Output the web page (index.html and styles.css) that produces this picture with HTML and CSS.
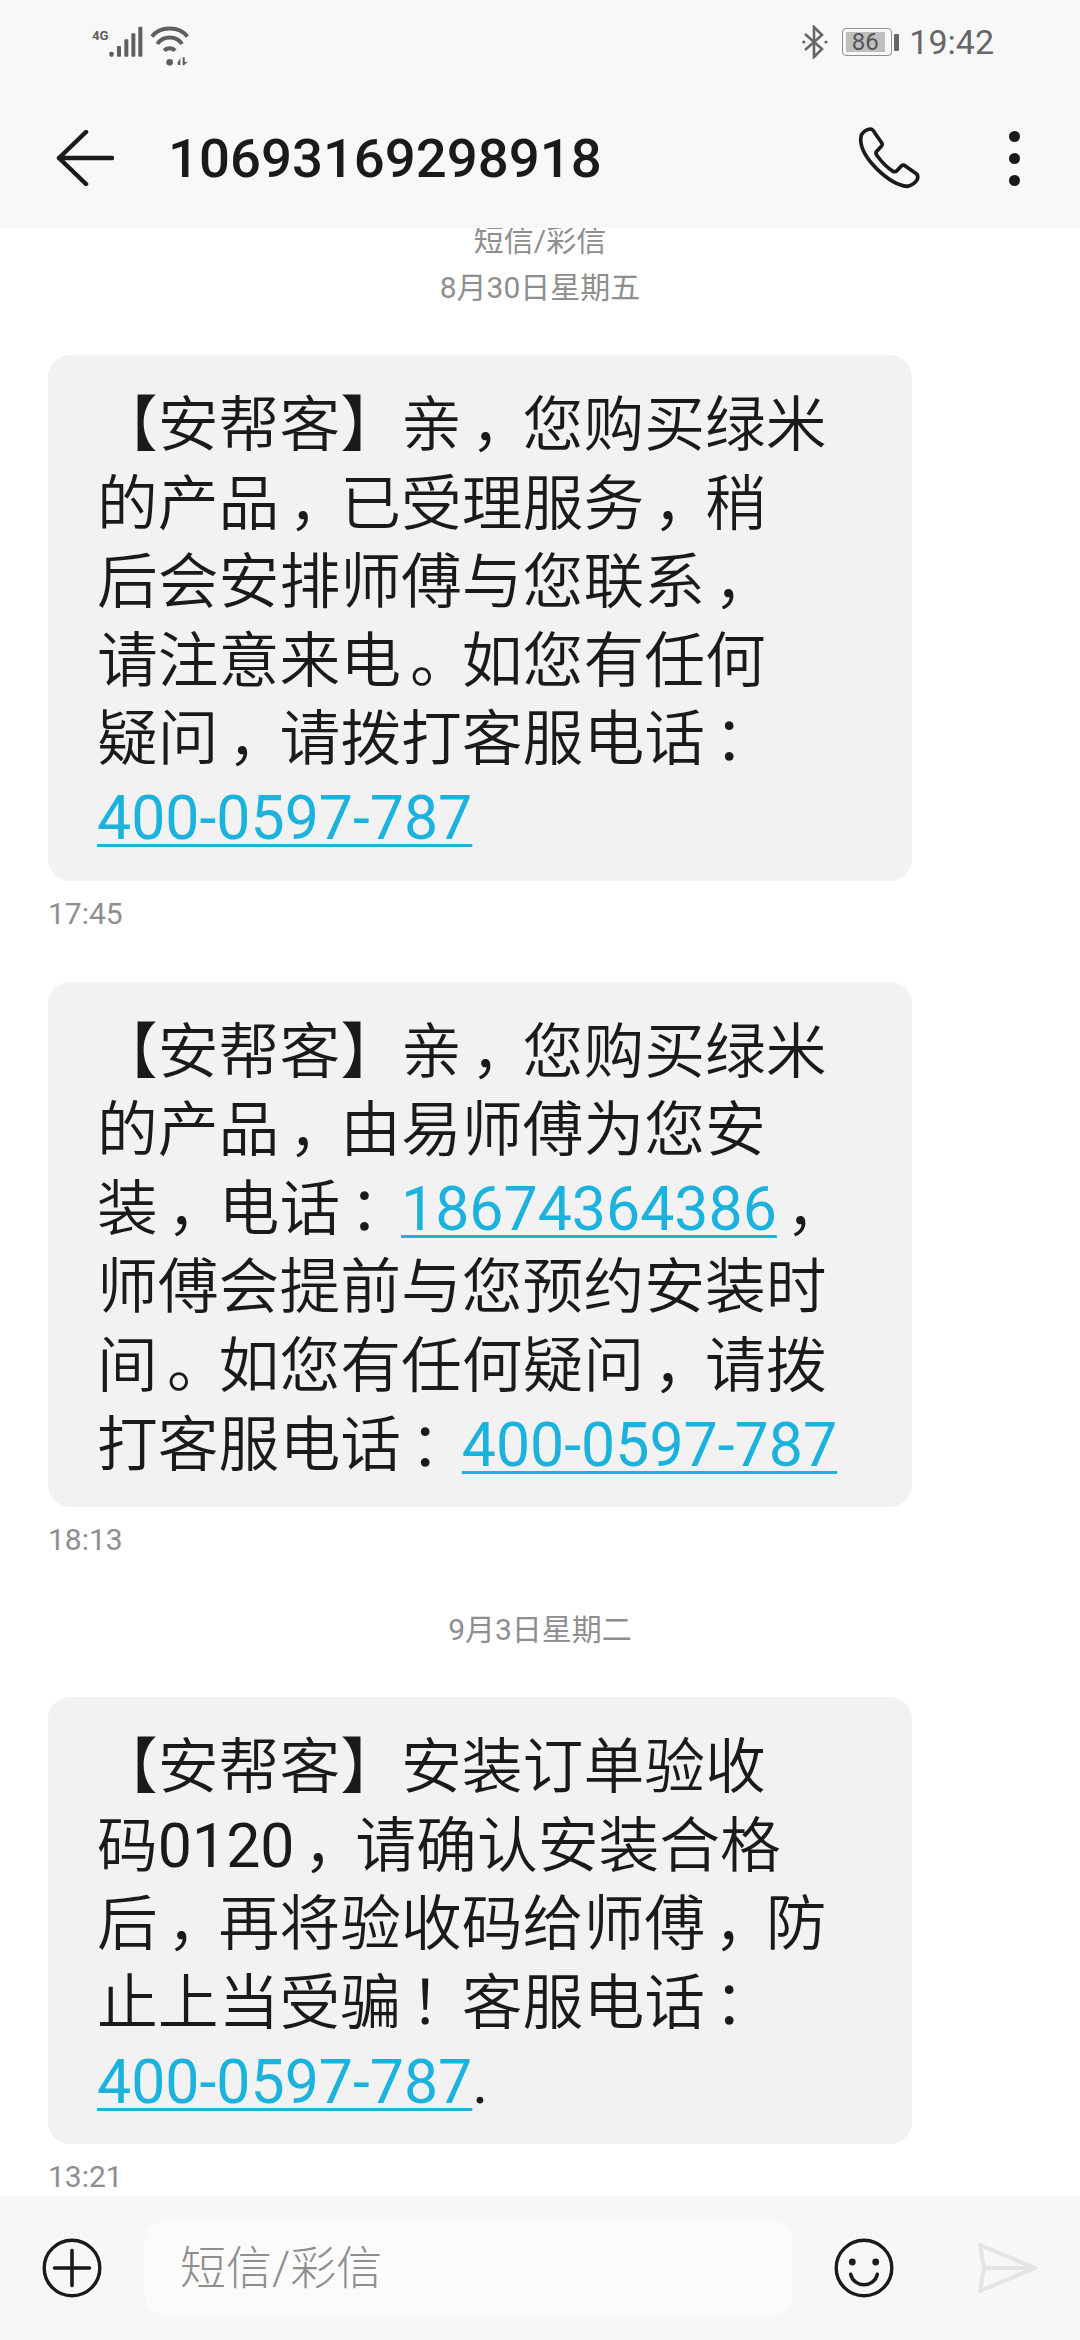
FILE: index.html
```html
<!DOCTYPE html>
<html lang="zh-CN">
<head>
<meta charset="utf-8">
<title>10693169298918</title>
<link rel="stylesheet" href="styles.css">
</head>
<body>
<div class="app">
  <div class="top">
    <div class="status">
      <svg class="radios" width="97" height="40" viewBox="12 18 291 120"><text x="12" y="60" class="sig-4g" textLength="50" lengthAdjust="spacingAndGlyphs">4G</text><g fill="#5f5f5f"><rect x="64" y="95" width="13" height="15" rx="5"/><rect x="87" y="78" width="12" height="32" rx="3"/><rect x="109" y="58" width="12" height="52" rx="3"/><rect x="130" y="40" width="12" height="70" rx="3"/><rect x="151" y="20" width="12" height="90" rx="3"/></g><g fill="none" stroke="#5f5f5f" stroke-width="12"><path d="M192 50C215 17 275 17 298 50"/><path d="M208 72C225 46 265 46 282 72"/><path d="M229 92C237 82 253 82 261 92"/></g><circle cx="245" cy="127" r="10" fill="#5f5f5f"/><path d="M268 128l9-14v21h-6zM284 112h6v14l9-1-11 11h-4z" fill="#5f5f5f"/></svg>
      <div class="status-right">
        <svg class="bt" width="26" height="34" viewBox="0 0 26 34"><path d="M3 9L20 24L12 32V2L20 10L3 25" fill="none" stroke="#666" stroke-width="2.6"/><circle cx="1.8" cy="17" r="1.6" fill="#666"/><circle cx="24" cy="17" r="1.6" fill="#666"/></svg>
        <div class="batt"><div class="batt-body"><span class="batt-fill">86</span></div><div class="batt-cap"></div></div>
        <span class="clock">19:42</span>
      </div>
    </div>
    <div class="bar">
      <svg class="back" width="58" height="56" viewBox="0 0 58 56"><path d="M30 2L3 28L30 54M3 28H56" fill="none" stroke="#1a1a1a" stroke-width="4.5" stroke-linecap="round" stroke-linejoin="round"/></svg>
      <h1 class="title">10693169298918</h1>
      <svg class="phone" width="64" height="64" viewBox="110 45 192 192"><path d="M120 72Q130 55 148 54Q155 55 160 65L182 97Q184 102 178 108L165 122Q162 128 168 135Q190 165 215 181Q222 184 228 178L240 165Q246 160 252 165L285 188Q292 195 288 205Q278 222 258 226Q215 222 165 172Q118 125 118 85Z" fill="none" stroke="#1a1a1a" stroke-width="11" stroke-linejoin="round"/></svg>
      <div class="dots"><i></i><i></i><i></i></div>
    </div>
  </div>

  <main class="thread">
    <p class="note clipped">短信/彩信</p>
    <p class="note">8月30日星期五</p>
    <div class="bubble">【安帮客】亲<span class="pc">，</span>您购买绿米<br>的产品<span class="pc">，</span>已受理服务<span class="pc">，</span>稍<br>后会安排师傅与您联系<span class="pc">，</span><br>请注意来电<span class="pc">。</span>如您有任何<br>疑问<span class="pc">，</span>请拨打客服电话<span class="pc">：</span><br><a class="link">400-0597-787</a></div>
    <p class="stamp">17:45</p>
    <div class="bubble">【安帮客】亲<span class="pc">，</span>您购买绿米<br>的产品<span class="pc">，</span>由易师傅为您安<br>装<span class="pc">，</span>电话<span class="pc">：</span><a class="link">18674364386</a><span class="pc">，</span><br>师傅会提前与您预约安装时<br>间<span class="pc">。</span>如您有任何疑问<span class="pc">，</span>请拨<br>打客服电话<span class="pc">：</span><a class="link">400-0597-787</a></div>
    <p class="stamp">18:13</p>
    <p class="note second">9月3日星期二</p>
    <div class="bubble">【安帮客】安装订单验收<br>码<span class="num">0120</span><span class="pc">，</span>请确认安装合格<br>后<span class="pc">，</span>再将验收码给师傅<span class="pc">，</span>防<br>止上当受骗<span class="pc">！</span>客服电话<span class="pc">：</span><br><a class="link">400-0597-787</a><span class="num">.</span></div>
    <p class="stamp">13:21</p>
  </main>

  <footer class="compose">
    <svg width="60" height="60" viewBox="0 0 60 60"><circle cx="30" cy="30" r="27.8" fill="none" stroke="#1a1a1a" stroke-width="3.4"/><path d="M12.5 30H47.5M30 12.5V47.5" stroke="#1a1a1a" stroke-width="3.6" stroke-linecap="round"/></svg>
    <div class="field">短信/彩信</div>
    <svg class="smile" width="60" height="60" viewBox="0 0 60 60"><circle cx="30" cy="30" r="27.8" fill="none" stroke="#1a1a1a" stroke-width="3.4"/><circle cx="18.3" cy="24" r="3.4" fill="#1a1a1a"/><circle cx="41.7" cy="24" r="3.4" fill="#1a1a1a"/><path d="M16.7 36.3C20 50.2 40 50.2 43.3 36.3" fill="none" stroke="#1a1a1a" stroke-width="3.6" stroke-linecap="round"/></svg>
    <svg class="send" width="60" height="50" viewBox="0 0 60 50"><path d="M2 2L57 25L2 48L6 25ZM6 25H57" fill="none" stroke="#e4e4e4" stroke-width="4" stroke-linejoin="round"/></svg>
  </footer>
</div>
</body>
</html>
```
FILE: styles.css
```css
* { box-sizing: border-box; }
html, body { margin: 0; padding: 0; background: #fff; }
.app {
  width: 1080px; height: 2340px; display: flex; flex-direction: column; overflow: hidden;
  font-family: Roboto, "Noto Sans CJK SC", sans-serif; color: #1a1a1a;
}
.top { background: #f8f8f8; height: 228px; flex: none; }
.status { height: 84px; display: flex; justify-content: space-between; align-items: center; padding: 0 86px 0 92px; }
.radios { margin-top: 8px; }
.status-right { display: flex; align-items: center; gap: 9px; }
.sig-4g { font: 700 40px Roboto; fill: #5f5f5f; }
.bt { margin-right: 5px; }
.batt { display: flex; align-items: center; gap: 2px; }
.batt-body { width: 50px; height: 28px; border: 1.5px solid #8f8f8f; border-radius: 4px; padding: 2.5px; }
.batt-fill { display: block; width: 39px; height: 20px; background: #bfbfbf; color: #555; font-size: 24px; line-height: 20px; text-align: center; }
.batt-cap { width: 5px; height: 17px; background: #666; border-radius: 1px; }
.clock { font-size: 34px; color: #666; margin-left: 1px; }
.bar { display: flex; align-items: center; height: 144px; padding: 4px 0 0 56px; }
.back { flex: none; }
.title { margin: 0 0 0 54px; font-size: 54.5px; font-weight: 500; color: #1a1a1a; flex: 1; line-height: 1; }
.phone { flex: none; margin-right: 87px; }
.dots { display: flex; flex-direction: column; gap: 11px; margin-right: 60px; }
.dots i { width: 11px; height: 11px; background: #1a1a1a; border-radius: 50%; display: block; }
.thread { flex: 1; min-height: 0; overflow: hidden; padding: 0 48px; }
.note { margin: 0; text-align: center; font-size: 30px; line-height: 46px; color: #8e8e8e; width: 984px; }
.clipped { margin-top: -10px; }
.clipped + .note { margin-top: 1px; }
.bubble {
  width: 864px; background: #f2f2f2; border-radius: 22px; padding: 32px 40px 22px 49px;
  font-size: 60.8px; line-height: 78.6px; margin-top: 44px; color: #1a1a1a; font-weight: 350;
}
.pc { font-feature-settings: "halt"; margin-left: .15em; margin-right: .35em; }
.num { font-weight: 400; }
.link { font-weight: 400; color: #1cb2de; text-decoration: underline; text-decoration-thickness: 3px; text-underline-offset: 5px; }
.stamp { margin: 15px 0 0; font-size: 30px; line-height: 36px; color: #8e8e8e; }
.stamp + .bubble { margin-top: 50px; }
.second { margin-top: 49px; }
.compose { flex: none; height: 144px; background: #f7f7f7; display: flex; align-items: center; padding: 0 0 0 42px; }
.field { width: 647px; height: 96px; margin-left: 43px; background: #fbfbfb; border-radius: 22px; font-size: 46px; line-height: 96px; padding-left: 35px; color: #8e8e8e; font-weight: 300; }
.smile { margin-left: 42px; }
.send { margin-left: 84px; }
```
